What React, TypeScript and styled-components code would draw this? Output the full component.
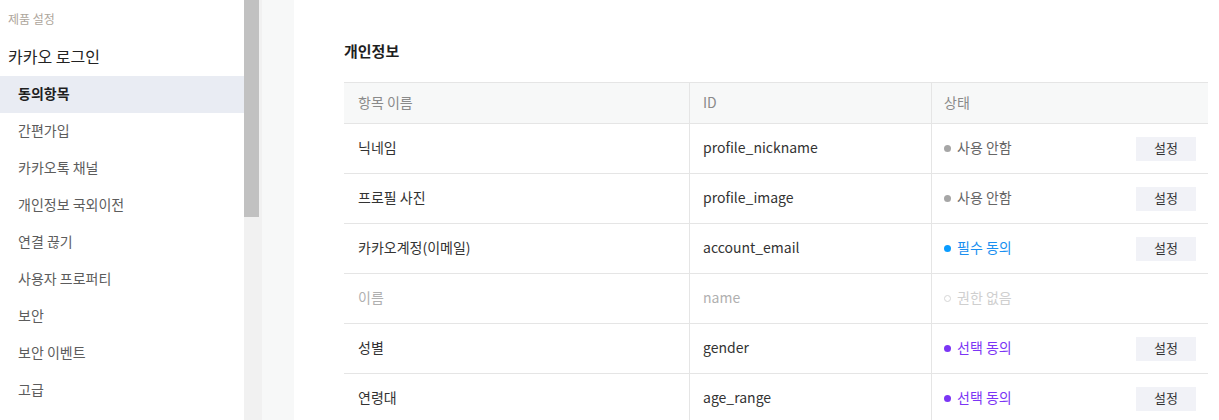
import React from "react";
import styled, { createGlobalStyle } from "styled-components";

const Global = createGlobalStyle`
  html, body { margin: 0; padding: 0; background: #fff; }
  body { font-family: "Noto Sans CJK KR", "Noto Sans", sans-serif; }
  * { box-sizing: border-box; }
`;

const Page = styled.div`
  display: flex;
  height: 420px;
  overflow: hidden;
  background: #fff;
`;

const Sidebar = styled.nav`
  width: 244px;
  flex-shrink: 0;
  display: flex;
  flex-direction: column;
  background: #fff;
`;

const SectionLabel = styled.div`
  padding: 11px 8px 0;
  font-size: 12px;
  line-height: 16px;
  color: #aea69c;
`;

const ProductTitle = styled.div`
  margin-top: 17px;
  margin-bottom: 8px;
  padding: 0 8px;
  font-size: 16px;
  line-height: 24px;
  color: #222;
`;

const NavItem = styled.div<{ $active?: boolean }>`
  height: 37px;
  display: flex;
  align-items: center;
  padding: 0 0 4px 18px;
  font-size: 14px;
  color: ${(p) => (p.$active ? "#1f1f1f" : "#5c5c5c")};
  font-weight: ${(p) => (p.$active ? 700 : 400)};
  background: ${(p) => (p.$active ? "#e9ecf3" : "transparent")};
`;

const ScrollTrack = styled.div`
  width: 18px;
  flex-shrink: 0;
  background: #f1f1f1;
`;

const ScrollThumb = styled.div`
  width: 15px;
  height: 217px;
  background: #c1c1c1;
`;

const Gutter = styled.div`
  width: 32px;
  flex-shrink: 0;
  background: #f7f8f8;
`;

const Main = styled.main`
  flex: 1;
  padding: 40px 11px 0 50px;
  background: #fff;
`;

const Title = styled.h2`
  margin: 0 0 20px;
  font-size: 15px;
  line-height: 22px;
  font-weight: 700;
  color: #1f1f1f;
`;

const Table = styled.div`
  display: grid;
  grid-template-columns: 346px 242px 1fr;
  border-top: 1px solid #e5e5e5;
`;

const Cell = styled.div<{ $head?: boolean; $muted?: boolean; $last?: boolean; $inset: number }>`
  height: ${(p) => (p.$head ? "41px" : "50px")};
  display: flex;
  align-items: center;
  padding: 0 12px 3px ${(p) => p.$inset}px;
  border-bottom: 1px solid #e5e5e5;
  border-right: ${(p) => (p.$last ? "none" : "1px solid #e5e5e5")};
  background: ${(p) => (p.$head ? "#f7f8f8" : "#fff")};
  font-size: 14px;
  color: ${(p) => (p.$head ? "#8a8a8a" : p.$muted ? "#b0b0b0" : "#333")};
  justify-content: space-between;
`;

type Kind = "off" | "required" | "optional" | "none";

const statusColors: Record<Kind, { dot: string; text: string }> = {
  off: { dot: "#a6a6a6", text: "#666" },
  required: { dot: "#0a9cff", text: "#1a8ff0" },
  optional: { dot: "#7b35f5", text: "#7b35f5" },
  none: { dot: "#dddddd", text: "#cfcfcf" },
};

const Status = styled.span<{ $kind: Kind }>`
  display: inline-flex;
  align-items: center;
  gap: 6px;
  color: ${(p) => statusColors[p.$kind].text};
`;

const Dot = styled.span<{ $kind: Kind }>`
  width: 7px;
  height: 7px;
  margin-top: 2px;
  border-radius: 50%;
  background: ${(p) => (p.$kind === "none" ? "transparent" : statusColors[p.$kind].dot)};
  border: ${(p) => (p.$kind === "none" ? "1px solid #d6d6d6" : "none")};
`;

const SetButton = styled.button`
  width: 60px;
  height: 24px;
  margin-top: 3px;
  border: none;
  background: #f1f2f7;
  font-family: inherit;
  font-size: 13px;
  color: #333;
  padding: 0 0 2px;
  cursor: pointer;
`;

const labels: Record<Kind, string> = {
  off: "사용 안함",
  required: "필수 동의",
  optional: "선택 동의",
  none: "권한 없음",
};

const rows: { name: string; id: string; kind: Kind }[] = [
  { name: "닉네임", id: "profile_nickname", kind: "off" },
  { name: "프로필 사진", id: "profile_image", kind: "off" },
  { name: "카카오계정(이메일)", id: "account_email", kind: "required" },
  { name: "이름", id: "name", kind: "none" },
  { name: "성별", id: "gender", kind: "optional" },
  { name: "연령대", id: "age_range", kind: "optional" },
];

const navItems = [
  "동의항목",
  "간편가입",
  "카카오톡 채널",
  "개인정보 국외이전",
  "연결 끊기",
  "사용자 프로퍼티",
  "보안",
  "보안 이벤트",
  "고급",
];

export default function App() {
  return (
    <>
      <Global />
      <Page>
        <Sidebar>
          <SectionLabel>제품 설정</SectionLabel>
          <ProductTitle>카카오 로그인</ProductTitle>
          {navItems.map((n, i) => (
            <NavItem key={n} $active={i === 0}>
              {n}
            </NavItem>
          ))}
        </Sidebar>
        <ScrollTrack>
          <ScrollThumb />
        </ScrollTrack>
        <Gutter />
        <Main>
          <Title>개인정보</Title>
          <Table>
            <Cell $head $inset={14}>항목 이름</Cell>
            <Cell $head $inset={13}>ID</Cell>
            <Cell $head $last $inset={12}>상태</Cell>
            {rows.map((r) => (
              <React.Fragment key={r.id}>
                <Cell $inset={14} $muted={r.kind === "none"}>{r.name}</Cell>
                <Cell $inset={13} $muted={r.kind === "none"}>{r.id}</Cell>
                <Cell $inset={12} $last>
                  <Status $kind={r.kind}>
                    <Dot $kind={r.kind} />
                    {labels[r.kind]}
                  </Status>
                  {r.kind !== "none" && <SetButton>설정</SetButton>}
                </Cell>
              </React.Fragment>
            ))}
          </Table>
        </Main>
      </Page>
    </>
  );
}
